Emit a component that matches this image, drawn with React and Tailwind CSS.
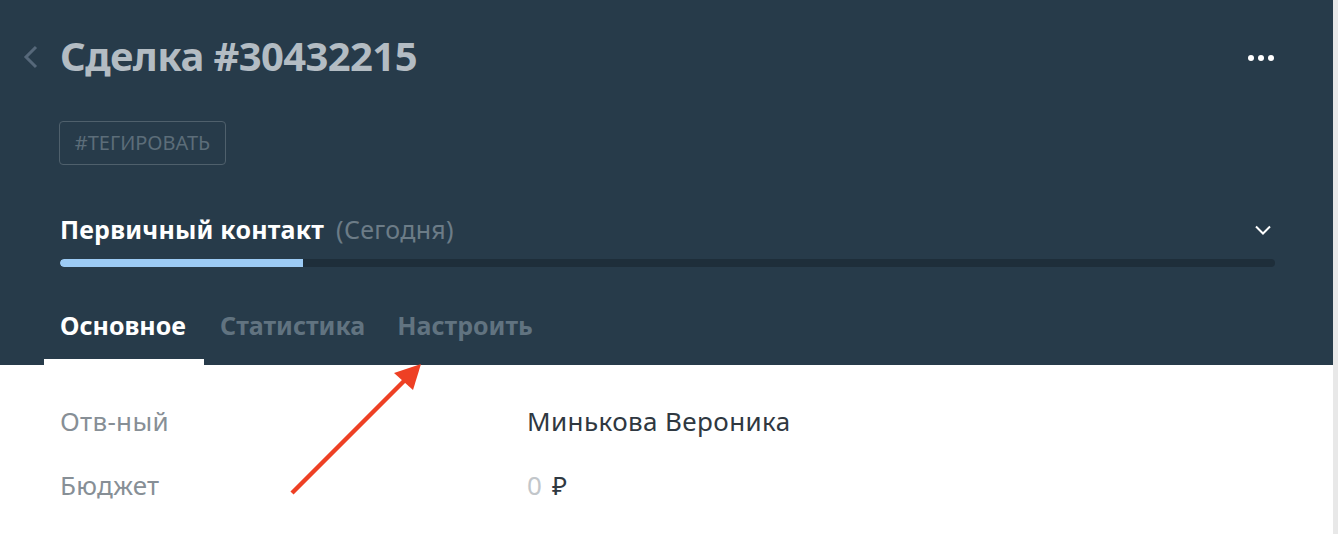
import React from "react";

const font = { fontFamily: '"Noto Sans", "Open Sans", sans-serif' };

const tabs = [
  { id: 1, label: "Основное", active: true },
  { id: 2, label: "Статистика" },
  { id: 3, label: "Настроить" },
];

const fields = [
  { id: 1, label: "Отв-ный", value: "Минькова Вероника" },
  { id: 2, label: "Бюджет", budget: true },
];

const App = () => {
  return (
    <div className="flex w-[1338px] h-[534px] overflow-hidden bg-white" style={font}>
      <div className="relative flex-1 flex flex-col">
        {/* header */}
        <div className="h-[365px] bg-[#273b4a] flex flex-col">
          <div className="flex items-center h-[58px] mt-[27px] pr-[58px]">
            <div className="w-[60px] pl-[22px] pt-[2px]">
              <svg width="17" height="24" viewBox="0 0 17 24" fill="none">
                <path d="M14 2 L4 12 L14 22" stroke="#56687a" strokeWidth="3" />
              </svg>
            </div>
            <h1 className="flex-1 text-[40px] font-bold text-[#b3bcc3] tracking-[-0.6px] leading-none">
              Сделка #30432215
            </h1>
            <div className="flex gap-[4px] pr-[1px] pt-[4px]">
              <span className="w-[6px] h-[6px] rounded-full bg-white" />
              <span className="w-[6px] h-[6px] rounded-full bg-white" />
              <span className="w-[6px] h-[6px] rounded-full bg-white" />
            </div>
          </div>

          <div className="pl-[59px] mt-[36px]">
            <button className="h-[44px] w-[167px] border border-[#4f606c] rounded-[4px] text-[20px] text-[#5c6d79] leading-none">
              #ТЕГИРОВАТЬ
            </button>
          </div>

          <div className="flex items-center justify-between pl-[60px] pr-[62px] mt-[48px] h-[34px]">
            <div className="flex items-baseline gap-[12px]">
              <span className="text-[25px] font-bold text-white tracking-[0.2px]">Первичный контакт</span>
              <span className="text-[25px] text-[#6c7c87] tracking-[0.3px]">(Сегодня)</span>
            </div>
            <svg width="16" height="10" viewBox="0 0 16 10" fill="none">
              <path d="M1 1.5 L8 8.5 L15 1.5" stroke="#ffffff" strokeWidth="2" />
            </svg>
          </div>

          <div className="ml-[60px] mr-[58px] mt-[12px] h-[8px] rounded-full bg-[#1e2e3a] overflow-hidden">
            <div className="h-full w-[243px] bg-[#9ccbf5] rounded-l-full" />
          </div>

          <div className="flex pl-[44px] mt-auto">
            {tabs.map((tab) => (
              <div
                key={tab.id}
                className={
                  tab.active
                    ? "w-[160px] px-4 border-b-[6px] border-white h-[72px] flex items-center"
                    : "px-4 border-b-[6px] border-transparent h-[72px] flex items-center"
                }
              >
                <span
                  className={
                    tab.active
                      ? "text-[25px] font-bold text-white"
                      : "text-[25px] font-bold text-[#617380]"
                  }
                >
                  {tab.label}
                </span>
              </div>
            ))}
          </div>
        </div>

        {/* fields */}
        <div className="flex flex-col pl-[60px] pt-[38px] gap-[28px]">
          {fields.map((f) => (
            <div key={f.id} className="flex items-center h-[36px]">
              <span className="w-[467px] text-[26px] text-[#878f96] tracking-[0.3px]">{f.label}</span>
              {f.budget ? (
                <span className="text-[26px]">
                  <span className="text-[#c2c6ca]">0</span>
                  <span className="text-[#2f3841] ml-[10px]">₽</span>
                </span>
              ) : (
                <span className="text-[26px] text-[#2f3841] tracking-[0.4px]">{f.value}</span>
              )}
            </div>
          ))}
        </div>

        {/* annotation arrow */}
        <svg className="absolute left-0 top-0 pointer-events-none" width="1333" height="534">
          <line x1="292" y1="493" x2="408" y2="377" stroke="#ee4024" strokeWidth="4.5" />
          <polygon points="421,364 394,373 413,390" fill="#ee4024" />
        </svg>
      </div>
      <div className="w-[5px] bg-[#e8e8e8]" />
    </div>
  );
};

export default App;
